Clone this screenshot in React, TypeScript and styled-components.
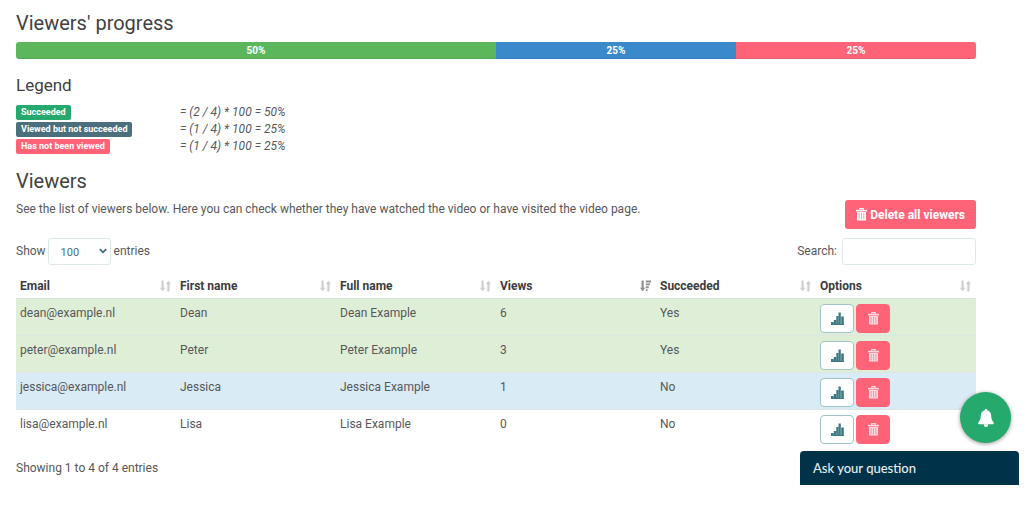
import React from 'react';
import styled, { createGlobalStyle } from 'styled-components';

const Global = createGlobalStyle`
  *, *::before, *::after { box-sizing: border-box; }
  body {
    margin: 0;
    background: #fff;
    color: #57585a;
    font: 12px/18px Roboto, "Liberation Sans", sans-serif;
  }
  button, input, select { font: inherit; }
`;

const Page = styled.main`
  padding: 11px 48px 35px 16px;
`;

const Title = styled.h2`
  margin: 0 0 7px;
  color: #404143;
  font-size: 20px;
  font-weight: 400;
  line-height: 24px;
`;

const Subtitle = styled.h3`
  margin: 16px 0 9px;
  color: #404143;
  font-size: 17px;
  font-weight: 400;
  line-height: 20px;
`;

const Progress = styled.div`
  display: flex;
  height: 17px;
  border-radius: 3px;
  overflow: hidden;
`;

const Segment = styled.div<{ $share: number; $color: string }>`
  flex: ${(p) => p.$share} 0 0;
  background: ${(p) => p.$color};
  box-shadow: inset 0 -1px 0 rgba(0, 0, 0, 0.08);
  color: #fff;
  font-size: 10px;
  font-weight: 700;
  line-height: 17px;
  text-align: center;
`;

const Legend = styled.dl`
  display: grid;
  grid-template-columns: 164px 1fr;
  grid-auto-rows: 17px;
  align-items: center;
  margin: 0 0 14px;
`;

const LegendLabel = styled.dt`
  display: flex;
`;

const Badge = styled.span<{ $color: string }>`
  padding: 0 5px;
  border-radius: 2px;
  background: ${(p) => p.$color};
  color: #fff;
  font-size: 9px;
  font-weight: 700;
  line-height: 15px;
`;

const Formula = styled.dd`
  margin: 0;
  font-style: italic;
  line-height: 17px;
`;

const Bar = styled.div`
  display: flex;
  justify-content: space-between;
  align-items: flex-start;
  gap: 16px;
`;

const Intro = styled.p`
  margin: 0;
`;

const DeleteAll = styled.button`
  display: flex;
  align-items: center;
  gap: 3px;
  height: 29px;
  padding: 0 11px;
  border: 0;
  border-radius: 3px;
  background: #ff6378;
  color: #fff;
  font-weight: 700;
  white-space: nowrap;
`;

const Controls = styled(Bar)`
  align-items: center;
  margin: 9px 0 8px;
`;

const Field = styled.label`
  display: flex;
  align-items: center;
  line-height: 27px;
`;

const SelectBox = styled.span`
  position: relative;
  display: flex;
  margin: 0 3px 0 2px;

  svg {
    position: absolute;
    top: 10px;
    right: 4px;
    pointer-events: none;
  }
`;

const Select = styled.select`
  width: 63px;
  height: 27px;
  padding: 0 12px;
  border: 1px solid #dfe8e9;
  border-radius: 3px;
  appearance: none;
  background: #fff;
  color: #4d6f7c;
  font-size: 11px;
`;

const SearchInput = styled.input`
  width: 134px;
  height: 27px;
  margin-left: 5px;
  padding: 0 8px;
  border: 1px solid #dfe8e9;
  border-radius: 3px;
  background: #fff;
`;

const Table = styled.table`
  width: 100%;
  table-layout: fixed;
  border-collapse: separate;
  border-spacing: 0;
`;

const HeadCell = styled.th`
  height: 26px;
  padding: 0 5px 0 4px;
  border-bottom: 1px solid #d9dde0;
  color: #3b3c3e;
  font-weight: 700;
  text-align: left;
`;

const HeadContent = styled.span`
  display: flex;
  justify-content: space-between;
  align-items: center;
`;

const Row = styled.tr<{ $color: string }>`
  background: ${(p) => p.$color};

  &:last-child td {
    border-color: transparent;
  }
`;

const Cell = styled.td`
  height: 37px;
  padding: 5px 4px 2px;
  border-bottom: 1px solid #dee6e2;
  vertical-align: top;
`;

const Actions = styled.div`
  display: flex;
  gap: 2px;
`;

const IconButton = styled.button<{ $danger?: boolean }>`
  display: flex;
  align-items: center;
  justify-content: center;
  width: 34px;
  height: 29px;
  padding: 0;
  border: 1px solid ${(p) => (p.$danger ? '#ff6378' : '#a3c4c7')};
  border-radius: 4px;
  background: ${(p) => (p.$danger ? '#ff6378' : '#fff')};
  color: ${(p) => (p.$danger ? '#ffd9de' : '#3d7a83')};
`;

const Summary = styled.p`
  margin: 12px 0 0;
`;

const BellButton = styled.button`
  position: fixed;
  right: 13px;
  bottom: 69px;
  display: flex;
  align-items: center;
  justify-content: center;
  width: 51px;
  height: 51px;
  padding: 0;
  border: 0;
  border-radius: 50%;
  background: #26a96c;
  box-shadow: 0 1px 4px rgba(0, 0, 0, 0.4);
  color: #fff;
`;

const ChatButton = styled.button`
  position: fixed;
  right: 5px;
  bottom: 27px;
  width: 219px;
  height: 34px;
  padding: 0 13px;
  border: 0;
  border-radius: 4px 4px 0 0;
  background: #003349;
  color: #e8eef1;
  font-family: Lato, sans-serif;
  font-size: 13px;
  font-weight: 500;
  text-align: left;
`;

const TrashIcon = () => (
  <svg width="11" height="13" viewBox="0 0 11 13" fill="none" stroke="currentColor" aria-hidden="true">
    <path d="M0 2.6h11" strokeWidth="1.6" />
    <path d="M3.7 2V.6h3.6V2" strokeWidth="1.1" />
    <path d="M1 4h9v8.5H1z" fill="currentColor" stroke="none" />
    <path d="M3.2 5v6.3M5.5 5v6.3M7.8 5v6.3" stroke="#ff6378" strokeWidth=".6" />
  </svg>
);

const ChartIcon = () => (
  <svg width="13" height="13" viewBox="0 0 13 13" fill="currentColor" aria-hidden="true">
    <path d="M0 10h2.6v3H0zM2.8 8h2.3v5H2.8zM5.3 4h2v9h-2zM7.5.5h2.3V13H7.5zM10.2 4.5h2.6V13h-2.6z" />
    <path d="M0 12h13v1H0z" />
  </svg>
);

const SortIcon = ({ active }: { active?: boolean }) => (
  <svg width="11" height="12" viewBox="0 0 11 12" fill={active ? '#8e8f91' : '#cfd0d1'} aria-hidden="true">
    <path d="M1.5 .5h2.2v7.3h1.6L2.6 11.5 0 7.8h1.500z" />
    {active ? (
      <path d="M5.8 .5H11v1.9H5.8zM5.8 3.4h4.2v1.9H5.8zM5.8 6.3h3v1.9h-3zM5.8 9.2h1.8v1.9H5.8z" />
    ) : (
      <path d="M7.3 11.5h2.2V4.2H11L8.4 .5 5.7 4.2h1.6z" />
    )}
  </svg>
);

const ChevronIcon = () => (
  <svg width="8" height="6" viewBox="0 0 8 6" fill="none" stroke="#3f6877" strokeWidth="1.7" aria-hidden="true">
    <path d="M.8 1.2 4 4.4l3.2-3.2" />
  </svg>
);

const BellIcon = () => (
  <svg width="16" height="18" viewBox="0 0 16 18" fill="currentColor" aria-hidden="true">
    <path d="M8 0c.8 0 1.2.5 1.2 1.3 2.5.6 4 2.7 4 5.2 0 3.2.7 4.9 2.1 6.600.9 1 .5 2.2-.8 2.2H1.500c-1.300 0-1.700-1.200-.8-2.200 1.400-1.700 2.100-3.400 2.100-6.600 0-2.500 1.500-4.600 4-5.200C6.800.5 7.200 0 8 0z" />
    <path d="M5.8 15.2h4.4v.6a2.200 2.200 0 0 1-4.400 0z" />
  </svg>
);

const legend = [
  { label: 'Succeeded', color: '#26a96c', bar: '#5cb75c', count: 2 },
  { label: 'Viewed but not succeeded', color: '#4c6f7e', bar: '#3a89ca', count: 1 },
  { label: 'Has not been viewed', color: '#ff6378', bar: '#ff6378', count: 1 },
];

const columns = ['Email', 'First name', 'Full name', 'Views', 'Succeeded', 'Options'];

const viewers = [
  { first: 'Dean', views: 6, succeeded: true },
  { first: 'Peter', views: 3, succeeded: true },
  { first: 'Jessica', views: 1, succeeded: false },
  { first: 'Lisa', views: 0, succeeded: false },
];

const rowColor = (v: (typeof viewers)[number]) =>
  v.succeeded ? '#dfeed7' : v.views > 0 ? '#d9ebf5' : '#fff';

export default function App() {
  const total = viewers.length;
  return (
    <>
      <Global />
      <Page>
        <Title>Viewers' progress</Title>
        <Progress>
          {legend.map((l) => (
            <Segment key={l.label} $share={l.count} $color={l.bar}>
              {`${(l.count / total) * 100}%`}
            </Segment>
          ))}
        </Progress>

        <Subtitle>Legend</Subtitle>
        <Legend>
          {legend.map((l) => (
            <React.Fragment key={l.label}>
              <LegendLabel>
                <Badge $color={l.color}>{l.label}</Badge>
              </LegendLabel>
              <Formula>{`= (${l.count} / ${total}) * 100 = ${(l.count / total) * 100}%`}</Formula>
            </React.Fragment>
          ))}
        </Legend>

        <Title>Viewers</Title>
        <Bar>
          <Intro>
            See the list of viewers below. Here you can check whether they have watched the video or have
            visited the video page.
          </Intro>
          <DeleteAll type="button">
            <TrashIcon />
            Delete all viewers
          </DeleteAll>
        </Bar>

        <Controls>
          <Field>
            Show
            <SelectBox>
              <Select defaultValue="100">
                <option>10</option>
                <option>25</option>
                <option>50</option>
                <option>100</option>
              </Select>
              <ChevronIcon />
            </SelectBox>
            entries
          </Field>
          <Field>
            Search:
            <SearchInput type="search" />
          </Field>
        </Controls>

        <Table>
          <thead>
            <tr>
              {columns.map((c) => (
                <HeadCell key={c} scope="col">
                  <HeadContent>
                    {c}
                    <SortIcon active={c === 'Views'} />
                  </HeadContent>
                </HeadCell>
              ))}
            </tr>
          </thead>
          <tbody>
            {viewers.map((v) => (
              <Row key={v.first} $color={rowColor(v)}>
                <Cell>{`${v.first.toLowerCase()}@example.nl`}</Cell>
                <Cell>{v.first}</Cell>
                <Cell>{`${v.first} Example`}</Cell>
                <Cell>{v.views}</Cell>
                <Cell>{v.succeeded ? 'Yes' : 'No'}</Cell>
                <Cell>
                  <Actions>
                    <IconButton type="button" aria-label={`Statistics of ${v.first}`}>
                      <ChartIcon />
                    </IconButton>
                    <IconButton type="button" $danger aria-label={`Delete ${v.first}`}>
                      <TrashIcon />
                    </IconButton>
                  </Actions>
                </Cell>
              </Row>
            ))}
          </tbody>
        </Table>
        <Summary>Showing 1 to 4 of 4 entries</Summary>
      </Page>

      <BellButton type="button" aria-label="Notifications">
        <BellIcon />
      </BellButton>
      <ChatButton type="button">Ask your question</ChatButton>
    </>
  );
}
